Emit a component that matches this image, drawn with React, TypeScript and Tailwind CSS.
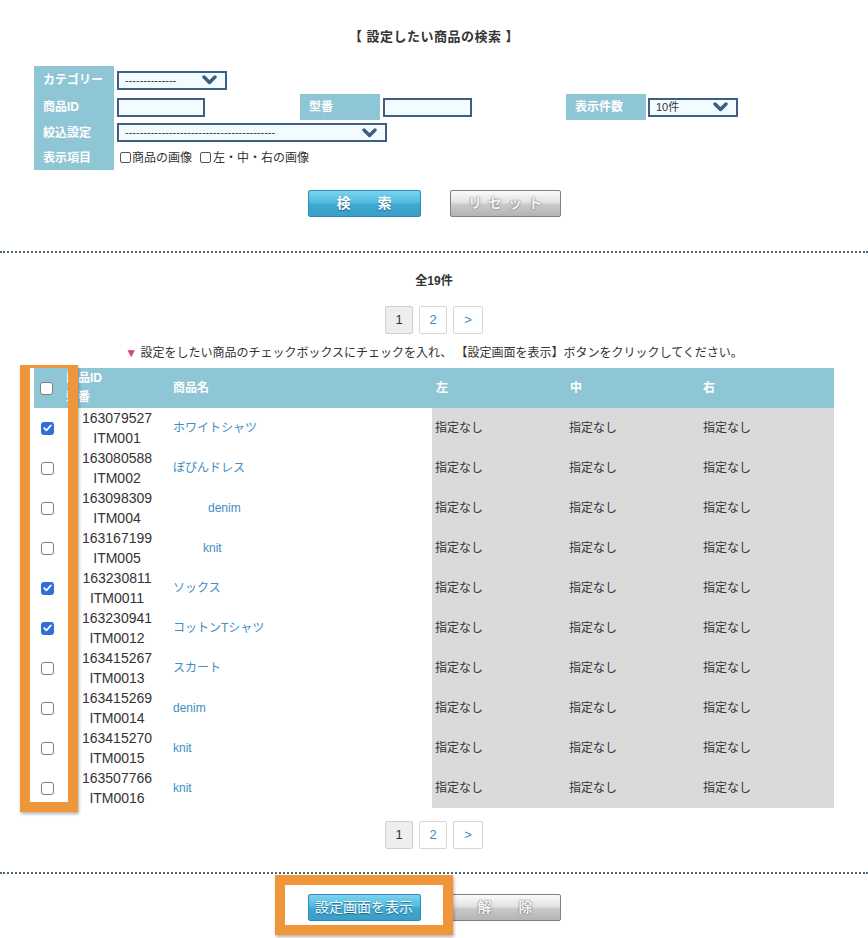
import React from "react";

type Row = { id: string; code: string; name: string; pad?: number; checked?: boolean };

const rows: Row[] = [
  { id: "163079527", code: "ITM001", name: "ホワイトシャツ", checked: true },
  { id: "163080588", code: "ITM002", name: "ぽぴんドレス" },
  { id: "163098309", code: "ITM004", name: "denim", pad: 35 },
  { id: "163167199", code: "ITM005", name: "knit", pad: 30 },
  { id: "163230811", code: "ITM0011", name: "ソックス", checked: true },
  { id: "163230941", code: "ITM0012", name: "コットンTシャツ", checked: true },
  { id: "163415267", code: "ITM0013", name: "スカート" },
  { id: "163415269", code: "ITM0014", name: "denim" },
  { id: "163415270", code: "ITM0015", name: "knit" },
  { id: "163507766", code: "ITM0016", name: "knit" },
];

const Chevron = () => (
  <svg width="15" height="10" viewBox="0 0 15 10">
    <polyline points="2,2 7.5,7.5 13,2" fill="none" stroke="#3d5c80" strokeWidth="3.4" strokeLinecap="round" strokeLinejoin="round" />
  </svg>
);

const Select = ({ text, className }: { text: string; className: string }) => (
  <div className={`h-[19px] border-2 border-[#3f5e82] bg-[#f2fcff] flex items-center justify-between pl-[6px] pr-[8px] text-[11px] text-[#333] ${className}`}>
    <span className="leading-none">{text}</span>
    <Chevron />
  </div>
);

const Label = ({ children }: { children: React.ReactNode }) => (
  <div className="bg-[#8fc6d6] text-white font-bold text-[12px] pl-[9px] flex items-center">{children}</div>
);

const Box = ({ checked }: { checked?: boolean }) =>
  checked ? (
    <span className="w-[13px] h-[13px] rounded-[3px] bg-[#2f6fd6] flex items-center justify-center">
      <svg width="9" height="8" viewBox="0 0 9 8">
        <polyline points="1.2,4.2 3.4,6.3 7.8,1.5" fill="none" stroke="white" strokeWidth="1.8" strokeLinecap="round" strokeLinejoin="round" />
      </svg>
    </span>
  ) : (
    <span className="w-[13px] h-[13px] rounded-[3px] border border-[#7d7d7d] bg-white block" />
  );

const Pager = () => (
  <div className="flex justify-center gap-[6px] text-[13px]">
    <span className="w-[28px] h-[28px] rounded-[2px] border border-[#cfcfcf] bg-[#eeeeee] text-[#333] flex items-center justify-center">1</span>
    <span className="w-[28px] h-[28px] rounded-[2px] border border-[#d6d6d6] bg-white text-[#3b8bc6] flex items-center justify-center">2</span>
    <span className="w-[30px] h-[28px] rounded-[2px] border border-[#d6d6d6] bg-white text-[#3b8bc6] flex items-center justify-center">&gt;</span>
  </div>
);

const BlueButton = ({ children }: { children: React.ReactNode }) => (
  <button className="w-[113px] h-[27px] rounded-[2px] border border-[#2f8db5] bg-[linear-gradient(to_bottom,#7ad3ee,#52bbe0_45%,#3ea7d0_55%,#3a9fc8)] text-white text-[14px] font-bold [text-shadow:0_1px_1px_rgba(0,60,90,0.6)] flex items-center justify-center">
    {children}
  </button>
);

const GrayButton = ({ children }: { children: React.ReactNode }) => (
  <button className="w-[111px] h-[27px] rounded-[2px] border border-[#7f7f7f] bg-[linear-gradient(to_bottom,#fbfbfb,#e2e2e2_45%,#c9c9c9_55%,#b4b4b4)] text-[#f4f4f4] text-[14px] font-bold [text-shadow:0_0_2px_#555] flex items-center justify-center">
    {children}
  </button>
);

const Divider = () => <div className="w-full border-t-2 border-dotted border-[#4c6a77]" />;

export default function App() {
  return (
    <div className="w-[868px] min-h-screen bg-white text-[#333] font-['Liberation_Sans','Noto_Sans_CJK_JP',sans-serif]">
      {/* Search form */}
      <div className="w-[800px] mx-auto pt-[29px]">
        <h2 className="text-center text-[13px] font-bold leading-[16px] tracking-[0.5px]">【 設定したい商品の検索 】</h2>

        <div className="mt-[21px] grid grid-cols-[80px_186px_80px_186px_80px_188px] grid-rows-[28px_26px_25px_25px]">
          <Label>カテゴリー</Label>
          <div className="col-span-5 flex items-center pl-[3px]">
            <Select text="--------------" className="w-[110px]" />
          </div>

          <Label>商品ID</Label>
          <div className="flex items-center pl-[3px]">
            <div className="w-[88px] h-[19px] border-2 border-[#3f5e82] bg-[#f2fcff]" />
          </div>
          <Label>型番</Label>
          <div className="flex items-center pl-[3px]">
            <div className="w-[89px] h-[19px] border-2 border-[#3f5e82] bg-[#f2fcff]" />
          </div>
          <Label>表示件数</Label>
          <div className="flex items-center pl-[2px]">
            <Select text="10件" className="w-[90px]" />
          </div>

          <Label>絞込設定</Label>
          <div className="col-span-5 flex items-center pl-[3px]">
            <Select text="-----------------------------------------" className="w-[270px]" />
          </div>

          <Label>表示項目</Label>
          <div className="col-span-5 flex items-center pl-[6px] text-[12px]">
            <span className="w-[11px] h-[11px] border border-[#555] rounded-[2px]" />
            <span className="ml-[1px]">商品の画像</span>
            <span className="ml-[8px] w-[11px] h-[11px] border border-[#555] rounded-[2px]" />
            <span className="ml-[2px]">左・中・右の画像</span>
          </div>
        </div>

        <div className="mt-[20px] flex justify-center gap-[29px]">
          <BlueButton>
            <span className="flex gap-[27px]">
              <span>検</span>
              <span>索</span>
            </span>
          </BlueButton>
          <GrayButton>
            <span className="tracking-[6px] pl-[6px]">リセット</span>
          </GrayButton>
        </div>
      </div>

      <div className="mt-[34px]">
        <Divider />
      </div>

      {/* Results */}
      <div className="w-[800px] mx-auto">
        <p className="mt-[20px] text-center text-[12px] font-bold leading-[16px]">全19件</p>
        <div className="mt-[17px]">
          <Pager />
        </div>
        <p className="mt-[11px] text-center text-[12px] leading-[16px]">
          <span className="text-[#d6456b]">▼</span> 設定をしたい商品のチェックボックスにチェックを入れ、 【設定画面を表示】ボタンをクリックしてください。
        </p>

        <div className="relative mt-[7px]">
          <div className="grid grid-cols-[30px_106px_262px_134px_134px_134px] h-[40px] bg-[#8fc6d6] text-white font-bold text-[12px]">
            <div className="flex items-center pl-[6px]">
              <Box />
            </div>
            <div className="flex items-center pl-[2px] leading-[19px]">
              商品ID
              <br />
              型番
            </div>
            <div className="flex items-center pl-[3px]">商品名</div>
            <div className="flex items-center pl-[4px]">左</div>
            <div className="flex items-center pl-[4px]">中</div>
            <div className="flex items-center pl-[3px]">右</div>
          </div>

          {rows.map((r) => (
            <div key={r.id} className="grid grid-cols-[30px_106px_262px_134px_134px_134px] h-[40px] text-[12px]">
              <div className="flex items-center pl-[7px]">
                <Box checked={r.checked} />
              </div>
              <div className="flex flex-col justify-center items-center text-[14px] leading-[20px] text-[#333]">
                <span>{r.id}</span>
                <span>{r.code}</span>
              </div>
              <div className="flex items-center pl-[3px] text-[#3f8dc4]">
                {r.pad === 35 && <span className="inline-block w-[35px]" />}
                {r.pad === 30 && <span className="inline-block w-[30px]" />}
                {r.name}
              </div>
              <div className="flex items-center pl-[3px] bg-[#dadada]">指定なし</div>
              <div className="flex items-center pl-[3px] bg-[#dadada]">指定なし</div>
              <div className="flex items-center pl-[3px] bg-[#dadada]">指定なし</div>
            </div>
          ))}

          {/* annotation: checkbox column */}
          <div className="absolute left-[-14px] top-[-3px] w-[58px] h-[447px] border-[10px] border-t-[3px] border-[#f0963a] shadow-[1px_2px_3px_rgba(0,0,0,0.3)] pointer-events-none" />
        </div>

        <div className="mt-[13px]">
          <Pager />
        </div>
      </div>

      <div className="mt-[23px]">
        <Divider />
      </div>

      <div className="w-[800px] mx-auto relative mt-[20px] pb-[17px]">
        <div className="flex justify-center gap-[29px]">
          <BlueButton>
            <span className="font-normal">設定画面を表示</span>
          </BlueButton>
          <GrayButton>
            <span className="flex gap-[27px]">
              <span>解</span>
              <span>除</span>
            </span>
          </GrayButton>
        </div>
        {/* annotation: submit button */}
        <div className="absolute left-[241px] top-[-19px] w-[178px] h-[60px] border-[10px] border-[#f0963a] shadow-[1px_2px_3px_rgba(0,0,0,0.3)] pointer-events-none" />
      </div>
    </div>
  );
}
